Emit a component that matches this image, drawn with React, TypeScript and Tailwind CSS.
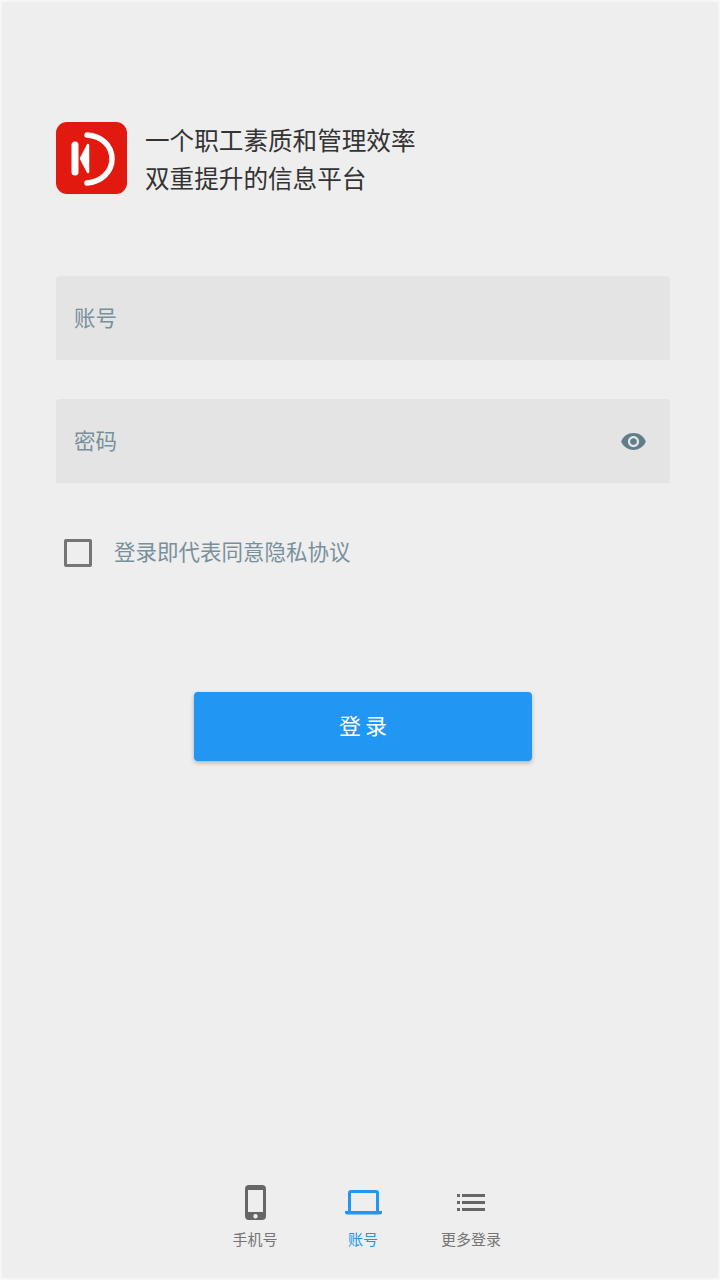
const cjk = "font-['Roboto','Noto_Sans_CJK_SC',sans-serif]";

function Logo() {
  return (
    <div className="flex h-[72px] w-[71px] shrink-0 items-center justify-center rounded-[11px] bg-[#e2190f]">
      <svg width="71" height="72" viewBox="0 0 71 72" fill="none">
        <path d="M19 23 V50" stroke="#fff" strokeWidth="7" strokeLinecap="round" />
        <path d="M25 36.500 L32 23 V50 Z" fill="#fff" stroke="#fff" strokeWidth="2.500" strokeLinejoin="round" />
        <path d="M31 13 C46 14 56 24 56 37 C56 50 45 60 31 61" stroke="#fff" strokeWidth="5.500" strokeLinecap="round" />
      </svg>
    </div>
  );
}

function Field({ label, eye }: { label: string; eye?: boolean }) {
  return (
    <div className="flex h-[84px] items-center justify-between rounded-t-[4px] bg-[#e4e4e4] pl-[18px] pr-[23px]">
      <span className="pt-[3px] text-[21.500px] text-[#78909c]">{label}</span>
      {eye && (
        <svg width="27" height="27" viewBox="0 0 24 24" fill="#607d8b">
          <path d="M12 4.500C7 4.500 2.730 7.610 1 12c1.730 4.390 6 7.500 11 7.500s9.270-3.110 11-7.500c-1.730-4.390-6-7.500-11-7.500zM12 17c-2.760 0-5-2.240-5-5s2.240-5 5-5 5 2.240 5 5-2.240 5-5 5zm0-8c-1.660 0-3 1.340-3 3s1.340 3 3 3 3-1.340 3-3-1.340-3-3-3z" />
        </svg>
      )}
    </div>
  );
}

function Tab({ label, active, children }: { label: string; active?: boolean; children: React.ReactNode }) {
  return (
    <div className="flex w-[108px] flex-col items-center">
      <div className="flex h-[38px] items-center justify-center">{children}</div>
      <span className={`mt-[9px] text-[15px] leading-[20px] ${active ? "text-[#2196f3]" : "text-[#757575]"}`}>{label}</span>
    </div>
  );
}

export default function App() {
  return (
    <div className={`flex h-[1280px] w-[720px] flex-col bg-[#eeeeee] shadow-[inset_0_0_0_2px_#f6f6f6] ${cjk}`}>
      <div className="ml-[56px] mt-[122px] flex items-start gap-[18px]">
        <Logo />
        <p className="mt-[1px] text-[24.600px] leading-[38px] text-[#333333]">
          一个职工素质和管理效率
          <br />
          双重提升的信息平台
        </p>
      </div>

      <div className="ml-[56px] mr-[50px] mt-[77px] flex flex-col gap-[39px]">
        <Field label="账号" />
        <Field label="密码" eye />
      </div>

      <div className="ml-[64px] mt-[56px] flex items-center gap-[22px]">
        <div className="h-[28px] w-[28px] rounded-[2px] border-[3px] border-[#757575]" />
        <span className="text-[21.500px] leading-[28px] text-[#78909c]">登录即代表同意隐私协议</span>
      </div>

      <button className="ml-[194px] mt-[125px] h-[69px] w-[338px] rounded-[4px] bg-[#2196f3] pl-[4px] text-[22px] tracking-[4px] text-white shadow-[0_2px_4px_rgba(0,0,0,0.25)]">
        登录
      </button>

      <div className="ml-[201px] mt-[422px] flex">
        <Tab label="手机号">
          <svg width="21" height="35" viewBox="0 0 21 35" fill="#666666">
            <path d="M4 0h13a4 4 0 0 1 4 4v27a4 4 0 0 1-4 4H4a4 4 0 0 1-4-4V4a4 4 0 0 1 4-4zM3 5v22h15V5H3zm7.500 24a2.200 2.200 0 1 0 0 4.400 2.200 2.200 0 0 0 0-4.400z" fillRule="evenodd" />
          </svg>
        </Tab>
        <Tab label="账号" active>
          <svg width="37" height="25" viewBox="0 0 37 25" fill="#2196f3">
            <path d="M6 0h25a3 3 0 0 1 3 3v18h-3V3H6v18H3V3a3 3 0 0 1 3-3z" />
            <path d="M0 21h37v1.500a2 2 0 0 1-2 2H2a2 2 0 0 1-2-2z" />
          </svg>
        </Tab>
        <Tab label="更多登录">
          <svg width="28" height="17" viewBox="0 0 28 17" fill="#666666">
            <path d="M0 0h3v3H0zM0 7h3v3H0zM0 14h3v3H0zM5 0h23v3H5zM5 7h23v3H5zM5 14h23v3H5z" />
          </svg>
        </Tab>
      </div>
    </div>
  );
}
